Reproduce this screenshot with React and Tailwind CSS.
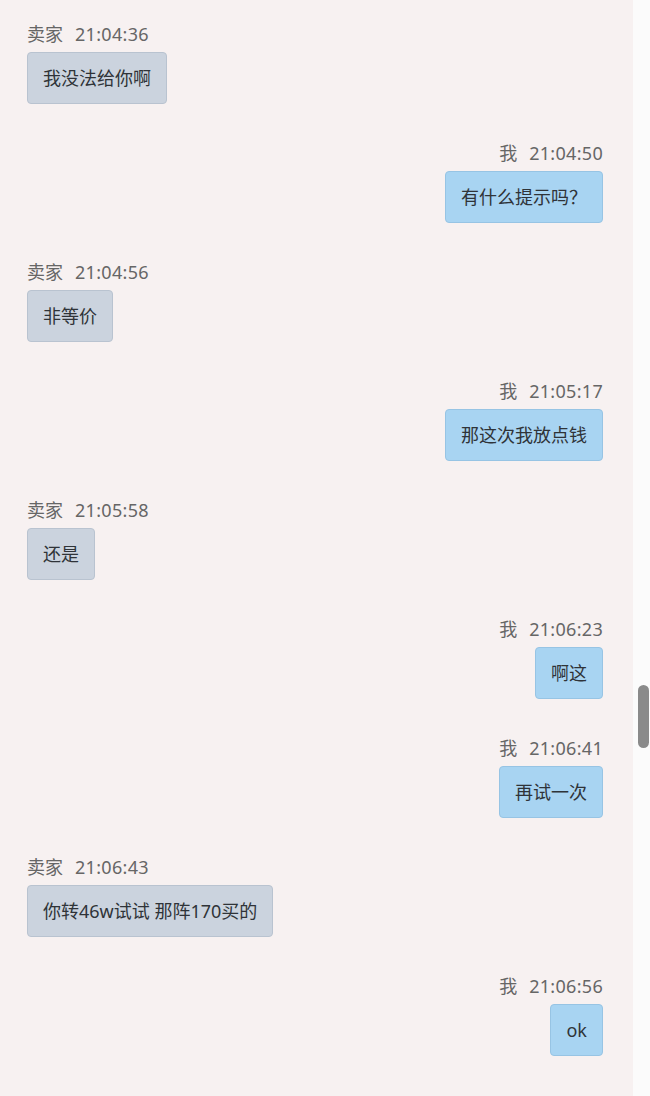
import React from 'react';

const messages = [
  { from: 'seller', time: '21:04:36', text: '我没法给你啊' },
  { from: 'me', time: '21:04:50', text: '有什么提示吗？' },
  { from: 'seller', time: '21:04:56', text: '非等价' },
  { from: 'me', time: '21:05:17', text: '那这次我放点钱' },
  { from: 'seller', time: '21:05:58', text: '还是' },
  { from: 'me', time: '21:06:23', text: '啊这' },
  { from: 'me', time: '21:06:41', text: '再试一次' },
  { from: 'seller', time: '21:06:43', text: '你转46w试试 那阵170买的' },
  { from: 'me', time: '21:06:56', text: 'ok' },
];

function Message({ from, time, text }) {
  const mine = from === 'me';
  return (
    <div className={`flex flex-col mb-[37px] ${mine ? 'items-end' : 'items-start'}`}>
      <div className="flex gap-3 text-[18px] leading-[24px] text-[#666]">
        <span>{mine ? '我' : '卖家'}</span>
        <span className="tracking-[0.3px]">{time}</span>
      </div>
      <div
        className={`mt-[6px] rounded-[4px] border px-[15px] py-[13px] text-[18px] leading-[24px] text-[#2f3338] ${
          mine ? 'bg-[#a8d4f2] border-[#97c4e4]' : 'bg-[#cbd3de] border-[#b9c3d0]'
        }`}
      >
        {text}
      </div>
    </div>
  );
}

export default function App() {
  return (
    <div
      className="flex h-[1096px] w-[650px] overflow-hidden"
      style={{ fontFamily: '"Noto Sans", "Noto Sans CJK SC", sans-serif' }}
    >
      <main className="flex-1 bg-[#f7f1f1] pt-[22px] pl-[27px] pr-[30px]">
        {messages.map((m) => (
          <Message key={m.time} {...m} />
        ))}
      </main>
      <aside className="w-[17px] bg-[#fbfbfb]">
        <div className="ml-[5px] mt-[685px] h-[63px] w-[11px] rounded-full bg-[#8a8a8a]" />
      </aside>
    </div>
  );
}
